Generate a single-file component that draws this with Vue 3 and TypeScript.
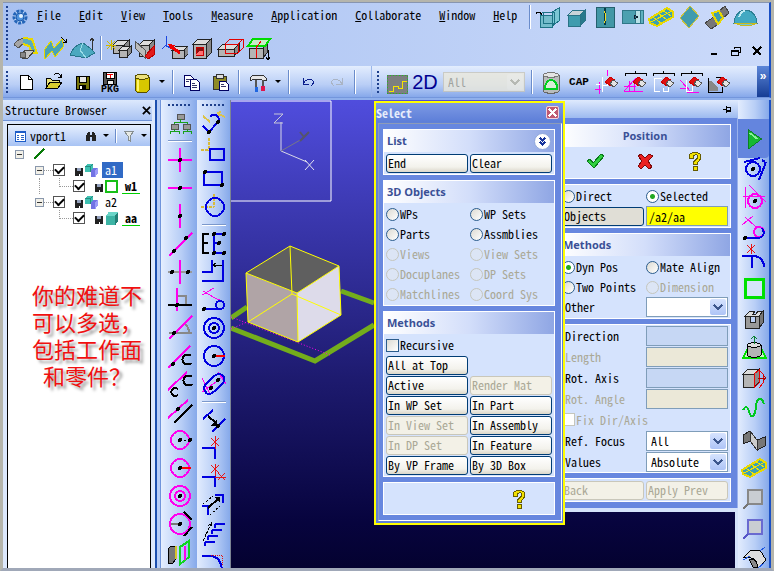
<script setup lang="ts">
import { ref } from 'vue'

interface Shape { d: string; s: string; f: string; w: number; dash?: string }

const p = (d: string, s = 'none', f = 'none', w = 1, dash?: string): Shape => ({ d, s, f, w, dash })
const ring = (x: number, y: number, r: number) =>
  `M${x - r} ${y}a${r} ${r} 0 1 0 ${2 * r} 0a${r} ${r} 0 1 0 ${-2 * r} 0Z`
const dot = (x: number, y: number, f = '#000') => p(ring(x, y, 2), 'none', f)

const M = '#ff00ee'
const B = '#0000e0'
const K = '#000'
const T = '#1d7285'
const Y = '#e8d800'
const G = '#b4b4b4'

const box = (x: number, y: number, w: number, h: number, o: number, front = G, top = '#dcdcdc', side = '#8a8a8a', line = '#222') => [
  p(`M${x} ${y}l${o} ${-o}h${w}l${-o} ${o}Z`, line, top),
  p(`M${x + w} ${y}l${o} ${-o}v${h}l${-o} ${o}Z`, line, side),
  p(`M${x} ${y}h${w}v${h}h${-w}Z`, line, front),
]
const eraser = [
  p('M12 14l5-5 5 3-4 6Z', '#c00', '#e01010'),
  p('M17 16l3-4 5 3-4 4Z', '#555', '#e4e4e4'),
]
const bracket = p('M4 8V5H25V8M14 5V3', K, 'none', 1)
const disk = [p('M8 8h13v13H8Z', K, '#77750a'), p('M11 8h7v6h-7Z', K, '#e8e8e8'), p('M11 17h7v4h-7Z', 'none', K), p('M12 18h2v3h-2Z', 'none', '#fff')]

const icons: Record<string, Shape[]> = {
  wirebox: [p('M17 9L24 5V18L17 23Z', T, '#7cc7d4'), p('M5 12h12v12H5Z', T, '#74bccb'), p('M8 9h11v11H8Z', T, 'none', 1), p('M5 12l3-3M17 24l4-4', T), p('M1 9h4l2 3M1 9l1 2', K)],
  cube: box(5, 12, 12, 11, 5, '#3f9cae', '#c9d3d8', '#28798c', '#2a7386'),
  plate: [p('M5 4h18v20H5Z', '#25606e', '#4297a6'), p('M14 5v17', '#063b48', 'none', 2), p('M13 8c3 3 2 10 0 12', '#f1df25')],
  sliding: [p('M3 7h13v13H3Z', '#2f7788', '#4ca0b0'), p('M16 7h5v13h-5Z', '#2f7788', '#b7e1e8'), p('M21 7h3v13h-3Z', '#2f7788', '#5fb1c0'), p('M15 12l4 2-4 2Z', '#123')],
  sheet: [p('M2 16L20 5L26 9V14L10 23L3 20Z', Y, '#3ea0b0', 2), p('M6 14l9 7M11 10l9 7M15 7l9 6M4 19L25 8', '#f3e400', 'none', 1)],
  rhomb: [p('M15 3L24 13L14 25L5 15Z', '#c9c13a', '#3f9bae')],
  loft: [p('M2 20l10-7 5 7-9 6Z', '#444', '#777'), p('M16 8l6-5 4 7-6 5Z', '#444', '#777'), p('M9 10l7-2 4 7-5 6Z', Y, '#3d9cb0', 2)],
  dome: [p('M3 20C4 3 25 3 26 20Z', '#2d7f93', '#42a9c2'), p('M3 20l6 2h12l5-2Z', '#c9b91e', '#6cc7d8'), p('M8 14c1-4 4-6 6-6', '#bfeaf2', 'none', 2)],
  bend: [p('M2 11C5 4 14 3 19 6L16 11C12 9 9 10 7 14Z', '#555', '#a5a5a5'), p('M11 4L20 5L25 19H20L17 12L11 10', Y, '#57aabf', 2), p('M8 20l6-4 8 1-6 7H10Z', '#444', '#c6c6c6'), p(ring(11, 21, 3), '#555', '#888')],
  fold: [p('M4 16L11 7L14 14L22 5L24 12L15 23L12 17L5 25Z', Y, '#4aa3b5', 1), p('M21 3l5 5M26 5v3h-3', K)],
  pyramid: [p('M2 21C5 13 10 10 15 9L22 14L27 19L18 24Z', '#27758a', '#4ca8bf'), p('M15 9L12 16L18 24', '#9bdde8'), p('M24 16V4M22 7l2-3 2 3', '#333')],
  explode: [...box(9, 11, 11, 8, 5), ...box(15, 16, 8, 7, 4), p('M2 11h10M7 6v10M3 7l8 8M11 7l-8 8', '#d0b800')],
  cutbox: [...box(7, 11, 10, 11, 5), p('M3 7L13 16V24L3 14Z', '#555', '#bbb'), p('M13 22L22 12V21L16 25Z', '#b00', '#e21b1b')],
  pushbox: [...box(12, 16, 12, 8, 4), p('M6 2V13M6 11L2 15M6 11l5 4', '#1b46e0', 'none', 1), p('M10 12L20 19', '#e00', 'none', 3), p('M8 10l7 1-4 5Z', 'none', '#e00')],
  shellbox: [...box(5, 10, 13, 14, 5), p('M8 13h7v8H8Z', '#c00', '#8a1010'), p('M8 21l3-4h4v4Z', 'none', '#ff7070')],
  overlap: [...box(2, 15, 16, 7, 5), p('M9 10l5-5H27V14L22 19H9ZM9 10H22V19M22 10l5-5', '#e30000')],
  greenplane: [p('M5 14H19V24H5Z', '#222', G), p('M19 14l4-4V19l-4 5Z', '#222', '#888'), p('M4 12L9 5H26L21 12Z', '#00dc00', '#c8ecc8', 2), p('M12 24V14L17 7', '#e00', 'none', 1), p('M24 16V26M22 23l2 3 2-3', K)],
  newdoc: [p('M8 7h8l4 4V21H8Z', K, '#fff'), p('M16 7v4h4', K)],
  open: [p('M6 20V10h4l2 2h7v3', K, '#e9e27c'), p('M6 20l4-6H22l-4 6Z', K, '#d8cc30'), p('M14 7c3-3 6-2 7 2M21 6v3h-3', K)],
  save: disk,
  pkg: [p('M7 1h13v12H7Z', K, '#555'), p('M10 1h8v6h-8Z', K, '#fff'), p('M11 3h6M14 3v4', '#e00'), p('M11 9h6v4h-6Z', K, '#eee')],
  cylinder: [p('M7 9V22C9 26 19 26 21 22V9Z', '#554d00', '#d8c800'), p('M10 12V23', '#fff36a', 'none', 2), p('M7 9C8 5 20 5 21 9C20 12 8 12 7 9Z', '#554d00', '#ece07a')],
  copy: [p('M6 7h6l3 3v8H6Z', '#000060', '#fff'), p('M12 11h6l3 3v8h-9Z', '#000060', '#fff'), p('M8 11h4M8 13h3M14 15h3M14 17h5M14 19h5', '#336')],
  paste: [p('M7 8h13v13H7Z', '#333', '#8e8a24'), p('M10 6h7v4h-7Z', '#333', '#ddd'), p('M13 13h6l3 3v6h-9Z', '#000060', '#fff'), p('M15 16h3M15 18h5', '#336')],
  tools: [p('M6 10L9 7H19L22 10V12H18L16 11H9L7 13Z', '#333', '#e6e6e6'), p('M12 12v7M19 12v6', '#555', 'none', 2), p('M11 19h3v5h-3Z', 'none', '#1f66e0'), p('M17 18h4v5h-4Z', 'none', '#e0144c')],
  undo: [p('M9 10v6h6M9 16c2-5 8-6 10-3 1 3-1 4-2 5', '#0a1e8c', 'none', 1)],
  redo: [p('M20 10v6h-6M20 16c-2-5-8-6-10-3-1 3 1 4 2 5', '#aab4c4', 'none', 1)],
  profile: [p('M4 7h20v18H4Z', '#6f6f6f', '#7c8080'), p('M4 7h20v18H4Z', '#22c022', 'none', 1, '1 2'), p('M6 23h4v-5h5v2h4v-7h5', '#f6e400', 'none', 1)],
  can: [p('M6 7V23C8 26 20 26 22 23V7Z', '#666', '#b9bcbc'), p('M6 7C8 4 20 4 22 7C20 10 8 10 6 7Z', '#777', '#e3e3e3'), p('M8 21C8 14 12 12 14 12S21 14 20 21Z', '#00d020', '#d7efd7', 2)],
  del1: [p('M2 21h6M14 2v6M6 14v12M18 9v6', M), p('M9 9v15M9 17h5V12M3 16h4', '#fff', 'none', 1), ...eraser],
  del2: [bracket, p('M3 23L15 10M8 24V13M13 24V14M3 18h12M3 23h19', M, 'none', 1), ...eraser],
  del3: [bracket, p('M13 10H5V23h6M14 20v3h5v-4', '#fff', 'none', 1), ...eraser],
  del4: [bracket, p('M3 12l12 13M3 20h8M10 24h12', M, 'none', 1), p('M9 12v11h6v-5', '#fff', 'none', 1), ...eraser],
  del5: [p('M3 13h3l7 6v4H3Z', 'none', '#888'), p('M3 10V24H17V19', K, 'none', 1), p('M11 9h6v5', K), ...eraser],

  hierarchy: [p('M11 5h7v5h-7ZM5 15h7v5H5ZM17 15h7v5h-7Z', '#555', '#999'), p('M14 10v3M8 15v-2H21v2M8 20v2M4 25v-3h9v3M21 20v2M17 25v-3h8v3', '#18a018')],
  plus: [p('M14 2V26M2 14H26', M, 'none', 2), dot(14, 14)],
  hline: [p('M2 14H26', M, 'none', 2), dot(14, 14)],
  vline: [p('M14 2V26', M, 'none', 2), dot(14, 14)],
  diagonal: [p('M3 26L26 3', M, 'none', 2), dot(8, 21), dot(20, 8)],
  midline: [p('M2 14H26', '#999', 'none', 2), p('M14 2V26', M, 'none', 2), dot(6, 14), dot(22, 14)],
  perp: [p('M11 10h9v9', '#888', 'none', 2), p('M11 2V25', M, 'none', 2), p('M2 19H26', K, 'none', 2), dot(11, 19)],
  angle: [p('M3 19H26M18 9c4 3 5 7 5 10', '#888', 'none', 2), p('M3 25L26 2', M, 'none', 2), dot(8, 19)],
  tangent: [p('M2 26L24 4', M, 'none', 2), dot(7, 22), p('M25 14a5 5 0 1 0 0 7', K, 'none', 2)],
  bitangent: [p('M2 20L21 2', M, 'none', 2), p('M26 7a5 5 0 1 0 0 7', K, 'none', 2), p('M12 19a4 4 0 1 0 0 6', K, 'none', 2)],
  parallel: [p('M2 20L22 2', M, 'none', 2), p('M8 25L26 7', K, 'none', 2), dot(12, 11)],
  circlerad: [p(ring(14, 14, 9), M, 'none', 2), p('M14 14H24', K, 'none', 1, '2 2'), dot(14, 14), dot(24, 14)],
  circlered: [p(ring(14, 14, 9), M, 'none', 2), p('M14 14H25', '#f00', 'none', 2), dot(14, 14)],
  concentric: [p(ring(14, 14, 10), M, 'none', 2), p(ring(14, 14, 5), M, 'none', 2), dot(14, 14)],
  circletan: [p(ring(14, 14, 10), M, 'none', 2), p('M5 14h9', '#777', 'none', 2), p('M18 2l8 8M26 17l-8 9', K, 'none', 2), dot(14, 14)],
  door: [p('M2 11l3-3h5v13l-3 4H2Z', K, '#777'), p('M10 8v13', '#d6c428', 'none', 2), p('M14 9l9-6v16l-9 7Z', '#10d520', 'none', 2), p('M19 8v14', M, 'none', 2)],

  slot: [p('M10 13L3 7M17 4l8 4M20 2l-2 6', '#dcc34a', 'none', 2), p('M3 17L9 23L18 13C20 8 17 4 10 7', B, 'none', 2), dot(9, 23), dot(18, 13)],
  rectorg: [p('M9 1V14M1 13H10', '#d8bb3b', 'none', 2, '3 1'), p('M10 12H24V23H10Z', B, 'none', 2)],
  rectangle: [p('M4 7H22V20H4Z', B, 'none', 2), dot(5, 7), dot(22, 20)],
  circorg: [p('M14 1V14M1 14H14', '#d8bb3b', 'none', 2, '3 1'), p(ring(15, 14, 9), B, 'none', 2)],
  mirror: [p('M9 4H3V23H9M3 13H8', K, 'none', 2), p('M23 4H14V23H23M14 13h5', B, 'none', 2), dot(14, 4), dot(24, 4), dot(19, 13), dot(14, 23), dot(24, 23)],
  lshape: [p('M2 14H12V2M2 23H23V2', B, 'none', 2), p('M22 7h-8M16 5l-3 2 3 2', K)],
  trim: [p('M2 9L14 2M3 5l12 7 9 4', M, 'none', 1), p('M4 23H20', B, 'none', 2), p(ring(20, 19, 4), B, 'none', 2), dot(4, 23)],
  circcenter: [p(ring(14, 14, 10), B, 'none', 2), p(ring(14, 14, 5), B, 'none', 2), dot(14, 14)],
  circradius: [p(ring(14, 14, 10), B, 'none', 2), p('M14 14H25', '#f00', 'none', 2), dot(14, 14)],
  ellipse: [p('M2 8l8 16M18 2l8 12M2 22l22-16', M), p('M5 21C2 17 6 14 12 8S22 4 24 7S23 14 16 20S7 25 5 21Z', B, 'none', 2), dot(11, 18), dot(18, 10)],
  movept: [p('M3 12L13 3M12 25L25 12', B, 'none', 2), p('M8 9l8 7', K, 'none', 2), p('M17 12v7h-7Z', 'none', K), dot(18, 19)],
  ext1: [p('M2 13H15V24', B, 'none', 2), p('M15 1V14M11 3l8 8M19 3l-8 8', '#e81414', 'none', 1)],
  ext2: [p('M2 14H15V24', B, 'none', 2), p('M15 1V13M11 2l8 8M19 2l-8 8M15 14H26M18 10l7 7M25 10l-7 7', '#e81414', 'none', 1)],
  offset: [p('M2 15H8V24M15 4H23V12', B, 'none', 2), p('M3 13L13 5M10 24L22 13', K, 'none', 1, '2 2'), p('M8 17L18 8', K, 'none', 2), p('M14 6h6v6Z', 'none', K)],
  steps: [p('M15 5h10M15 5v4M12 11h10M12 11v4M8 17h10M8 17v4M5 23h10M5 23v4', B, 'none', 2), p('M3 22L11 5M8 7l3-3v4', K, 'none', 1, '3 1')],
  fillet: [p('M2 9H10C18 9 22 15 22 26', B, 'none', 2), p('M11 8H22V18', '#e01010', 'none', 1, '1 1')],

  tanarc: [p(ring(13, 15, 7), B, 'none', 2), p('M4 8L20 4M26 8L19 26', B, 'none', 2), p('M22 6l3 2', B, 'none', 2), dot(13, 15)],
  tancirc: [p('M5 3V24M3 12H25M9 1L26 18', M, 'none', 1), p(ring(15, 17, 7), M, 'none', 2), dot(15, 17)],
  trimr: [p('M2 11L13 2M5 3l10 9 6 2', M, 'none', 1), p(ring(19, 18, 5), M, 'none', 2), p('M3 24H19C24 23 25 18 22 14', B, 'none', 2), dot(5, 24)],
  blend: [p('M2 12H14C20 12 24 17 24 23M12 12V24', B, 'none', 2), p('M11 0V10M7 1l8 8M15 1l-8 8', '#e81414', 'none', 1)],
  greensq: [p('M5 5H23V23H5Z', '#00e000', '#d4e4fa', 3)],
  notch: [p('M5 12l5-5h5l-2 3h3l2-3h5l-4 5Z', '#222', '#ddd'), p('M5 12h5v6h5v-6h4v12H5Z', '#222', '#999'), p('M19 12l4-5v12l-4 5Z', '#222', '#777')],
  extrude: [p('M3 24L7 16H22L26 24Z', '#00e000', '#c9f0c9', 2), p('M7 11V21C9 24 19 24 21 21V11Z', K, G), p('M7 11C9 8 19 8 21 11C19 14 9 14 7 11Z', K, '#ddd'), p('M14 10V2M11 5l3-3 3 3', '#0a8030', 'none', 1)],
  pull: [...box(3, 10, 11, 13, 5), p('M14 10l5-4v13l-5 5ZM19 6l4 4v9l-4 5', '#e00'), p('M18 14H26M23 11l3 3-3 3', '#a00', 'none', 1)],
  spline: [p('M3 16C6 11 8 13 9 18C12 26 15 22 16 12C17 4 21 1 24 10', '#00c820', 'none', 2)],
  surface: [p('M3 11L10 7L17 16L25 13V22L17 26L10 17L3 20Z', '#222', '#777'), p('M10 7L17 16V26L10 17Z', '#333', '#ccc')],
  zoom1: [p('M8 6H22V20H8Z', '#888', '#c9cdd2', 2), p('M8 20L3 25', '#777', 'none', 2)],
  zoom2: [p('M8 6H22V20H8Z', '#6a6ad0', '#c9cdd2', 2), p('M8 20L3 25', '#5757c8', 'none', 2)],
  round: [p('M4 13L11 6H20L26 16L18 24C17 16 14 13 4 13Z', K, '#ddd'), p('M9 15l4 8 5 1C17 17 15 15 9 15Z', K, '#888'), p('M3 16L10 12M20 7l5-4M18 24l6-5', '#1d56e0', 'none', 1)],

  check: [p('M6 14L9 12L12 16L20 7L23 9L13 21Z', '#087a18', '#30d040')],
  cross: [p('M7 9L10 7L14 11L18 7L22 9L17 14L21 20L18 22L14 18L10 22L7 19L11 14Z', '#7c0909', '#ea2020')],
  help: [p('M8 10C8 4 20 4 20 10C20 14 16 14 16 17H12C12 13 17 12 17 10C17 7 12 7 12 11H8ZM12 19h4v4h-4Z', '#665c00', '#f2e000')],
}

const menus = ['File', 'Edit', 'View', 'Tools', 'Measure', 'Application', 'Collaborate', 'Window', 'Help']
const solids = ['wirebox', 'cube', 'plate', 'sliding', 'sheet', 'rhomb', 'loft', 'dome']
const shapeRow = ['bend', 'fold', 'pyramid', '|', 'explode', 'cutbox', 'pushbox', 'shellbox', 'overlap', 'greenplane']
const erasers = ['del1', 'del2', 'del3', 'del4', 'del5']
const stripOne = ['hierarchy', '|', 'plus', 'hline', 'vline', 'diagonal', 'midline', 'perp', 'angle', 'tangent', 'bitangent', 'parallel', 'circlerad', 'circlered', 'concentric', 'circletan', 'door']
const stripTwo = ['slot', 'rectorg', 'rectangle', 'circorg', '|', 'mirror', 'lshape', 'trim', 'circcenter', 'circradius', 'ellipse', '|', 'movept', 'ext1', 'ext2', 'offset', 'steps', 'fillet']
const stripRight = ['tanarc', 'tancirc', 'trimr', 'blend', 'greensq', 'notch', 'extrude', 'pull', 'spline', 'surface', 'sheet', 'zoom1', 'zoom2', 'round']

const tree = [
  { name: 'a1', part: true, selected: true, last: false },
  { name: 'w1', part: false, selected: false, last: false },
  { name: 'a2', part: true, selected: false, last: true },
  { name: 'aa', part: false, selected: false, last: true },
]

const objectKinds = [
  { label: 'WPs', off: false }, { label: 'WP Sets', off: false },
  { label: 'Parts', off: false }, { label: 'Assmblies', off: false },
  { label: 'Views', off: true }, { label: 'View Sets', off: true },
  { label: 'Docuplanes', off: true }, { label: 'DP Sets', off: true },
  { label: 'Matchlines', off: true }, { label: 'Coord Sys', off: true },
]
const methods = [
  { label: 'All at Top', off: false }, null,
  { label: 'Active', off: false }, { label: 'Render Mat', off: true },
  { label: 'In WP Set', off: false }, { label: 'In Part', off: false },
  { label: 'In View Set', off: true }, { label: 'In Assembly', off: false },
  { label: 'In DP Set', off: true }, { label: 'In Feature', off: false },
  { label: 'By VP Frame', off: false }, { label: 'By 3D Box', off: false },
]
const fields = [
  { label: 'Direction', off: false }, { label: 'Length', off: true },
  { label: 'Rot. Axis', off: false }, { label: 'Rot. Angle', off: true },
]
const source = ref('Selected')
const mode = ref('Dyn Pos')
const kind = ref('')
const target = ref('/a2/aa')
</script>

<template>
  <div class="window">
    <header class="top">
      <i class="grip tall"></i>
      <div class="rows">
        <div class="row first">
          <svg class="logo" viewBox="0 0 16 16" aria-hidden="true">
            <circle cx="8" cy="8" r="6" fill="#cfe6fb" stroke="#2465b8" stroke-width="3" stroke-dasharray="3 1" />
            <circle cx="8" cy="8" r="4" fill="#4f93dc" stroke="#1c58ac" />
            <circle cx="9" cy="7" r="2" fill="#e4f2ff" />
          </svg>
          <nav class="menu">
            <a v-for="m in menus" :key="m" href="#"><u>{{ m[0] }}</u>{{ m.slice(1) }}</a>
          </nav>
          <i class="sep menu-sep"></i>
          <button v-for="n in solids" :key="n" class="ico" :aria-label="n">
            <svg viewBox="0 0 28 28"><path v-for="(s, i) in icons[n]" :key="i" :d="s.d" :stroke="s.s" :fill="s.f" :stroke-width="s.w" :stroke-dasharray="s.dash" /></svg>
          </button>
        </div>
        <div class="row second">
          <template v-for="n in shapeRow" :key="n">
            <i v-if="n === '|'" class="sep narrow"></i>
            <button v-else class="ico" :aria-label="n">
              <svg viewBox="0 0 28 28"><path v-for="(s, i) in icons[n]" :key="i" :d="s.d" :stroke="s.s" :fill="s.f" :stroke-width="s.w" /></svg>
            </button>
          </template>
          <div class="controls">
            <button aria-label="Minimize"><svg viewBox="0 0 12 12"><path d="M2 9H8" stroke="#000" stroke-width="2" /></svg></button>
            <button aria-label="Restore"><svg viewBox="0 0 12 12"><path d="M4 4V2H10V7H8M4 2H10M1 5H8V10H1ZM1 6H8" stroke="#000" fill="none" /></svg></button>
            <button aria-label="Close"><svg viewBox="0 0 12 12"><path d="M2 2L10 10M10 2L2 10" stroke="#000" stroke-width="2" /></svg></button>
          </div>
        </div>
      </div>
    </header>

    <div class="toolbar">
      <div class="bar standard">
        <i class="grip"></i>
        <button v-for="n in ['newdoc', 'open', 'save']" :key="n" class="ico" :aria-label="n">
          <svg viewBox="0 0 28 28"><path v-for="(s, i) in icons[n]" :key="i" :d="s.d" :stroke="s.s" :fill="s.f" /></svg>
        </button>
        <button class="ico pkg"><svg viewBox="0 0 28 14"><path v-for="(s, i) in icons.pkg" :key="i" :d="s.d" :stroke="s.s" :fill="s.f" /></svg>PKG</button>
        <button class="ico spaced" aria-label="cylinder"><svg viewBox="0 0 28 28"><path v-for="(s, i) in icons.cylinder" :key="i" :d="s.d" :stroke="s.s" :fill="s.f" :stroke-width="s.w" /></svg></button>
        <button class="drop" aria-label="More solids"></button>
        <i class="sep"></i>
        <button v-for="n in ['copy', 'paste']" :key="n" class="ico" :aria-label="n">
          <svg viewBox="0 0 28 28"><path v-for="(s, i) in icons[n]" :key="i" :d="s.d" :stroke="s.s" :fill="s.f" /></svg>
        </button>
        <i class="sep"></i>
        <button class="ico" aria-label="tools"><svg viewBox="0 0 28 28"><path v-for="(s, i) in icons.tools" :key="i" :d="s.d" :stroke="s.s" :fill="s.f" :stroke-width="s.w" /></svg></button>
        <button class="drop" aria-label="More tools"></button>
        <i class="sep"></i>
        <button v-for="n in ['undo', 'redo']" :key="n" class="ico" :aria-label="n">
          <svg viewBox="0 0 28 28"><path v-for="(s, i) in icons[n]" :key="i" :d="s.d" :stroke="s.s" :fill="s.f" :stroke-width="s.w" /></svg>
        </button>
        <i class="sep"></i>
      </div>
      <div class="bar drawing">
        <i class="grip"></i>
        <button class="ico" aria-label="profile"><svg viewBox="0 0 28 28"><path v-for="(s, i) in icons.profile" :key="i" :d="s.d" :stroke="s.s" :fill="s.f" :stroke-width="s.w" :stroke-dasharray="s.dash" /></svg></button>
        <button class="ico two-d">2D</button>
        <span class="combo filter">
          <select disabled aria-label="Filter"><option>All</option></select>
          <svg viewBox="0 0 16 16" aria-hidden="true"><path d="M4 6l4 4 4-4" /></svg>
        </span>
        <i class="sep"></i>
        <button class="ico" aria-label="can"><svg viewBox="0 0 28 28"><path v-for="(s, i) in icons.can" :key="i" :d="s.d" :stroke="s.s" :fill="s.f" :stroke-width="s.w" /></svg></button>
        <button class="ico cap">CAP</button>
        <button v-for="n in erasers" :key="n" class="ico" :aria-label="n">
          <svg viewBox="0 0 28 28"><path v-for="(s, i) in icons[n]" :key="i" :d="s.d" :stroke="s.s" :fill="s.f" :stroke-width="s.w" /></svg>
        </button>
      </div>
      <button class="overflow">»</button>
    </div>

    <main class="work">
      <aside class="browser">
        <div class="browser-title">
          <span>Structure Browser</span>
          <button aria-label="Close browser"><svg viewBox="0 0 10 10"><path d="M1 1L9 9M9 1L1 9" stroke="#000" stroke-width="1" /></svg></button>
        </div>
        <div class="tree">
          <div class="tree-head">
            <svg class="list" viewBox="0 0 12 12"><path d="M1 1h10v10H1Z" fill="#fff" stroke="#1c5cc8" /><path d="M1 2H11" stroke="#1c5cc8" stroke-width="2" /><path d="M3 5h2M3 7h2M3 9h2M7 5h3M7 7h3M7 9h3" stroke="#2a64c4" /></svg>
            <span>vport1</span>
            <svg class="find" viewBox="0 0 12 12"><path d="M1 11V6l2-4h2v3h2V2h2l2 4v5H7V7H5v4Z" fill="#222" /></svg>
            <i class="caret"></i>
            <i class="sep slim"></i>
            <svg class="find" viewBox="0 0 12 12"><path d="M1 1H11L7 6V11L5 10V6Z" fill="#e7e9e4" stroke="#868e90" /></svg>
            <i class="caret"></i>
          </div>
          <div class="node root"><i class="minus"></i><svg class="slash" viewBox="0 0 12 12"><path d="M1 11L11 1" stroke="#087a08" stroke-width="2" /></svg></div>
          <div v-for="n in tree" :key="n.name" class="node" :class="n.part ? 'part' : 'leaf'">
            <template v-if="n.part"><i class="minus"></i><i class="stub"></i></template>
            <template v-else><i class="pipe" :class="{ end: n.last }"></i><i class="elbow"></i></template>
            <input :id="'node-' + n.name" type="checkbox" class="tick" checked>
            <svg class="mini" viewBox="0 0 10 10"><path d="M1 1h8v8H1Z" fill="#222" /><path d="M3 1h4v3H3Z" fill="#93a0bc" /><path d="M5 7h1v2H5Z" fill="#fff" /></svg>
            <svg v-if="n.part" class="glyph" viewBox="0 0 16 16"><path d="M1 4l3-3h6v6l-3 3H1Z" fill="#3fc1b2" /><path d="M1 4h6v6M7 4l3-3" stroke="#23897e" fill="none" /><path d="M7 8l3-3h5v6l-3 4H7Z" fill="#7373e4" /><path d="M7 8h5v7l3-4V5l-3 3Z" fill="#9c9cf8" /></svg>
            <svg v-else-if="n.name === 'w1'" class="glyph" viewBox="0 0 16 16"><path d="M2 2H14V14H2Z" fill="#fff" stroke="#18c018" stroke-width="2" /></svg>
            <svg v-else class="glyph" viewBox="0 0 16 16"><path d="M2 5l3-4h10v10l-3 4H2Z" fill="#3db4a5" /><path d="M12 5l3-4v10l-3 4Z" fill="#237f76" /><path d="M2 5l3-4h10l-3 4Z" fill="#6ad5c8" /></svg>
            <label :for="'node-' + n.name" :class="{ selected: n.selected }">{{ n.name }}</label>
          </div>
          <p class="note">你的难道不<br>可以多选，<br>包括工作面<br>和零件？</p>
        </div>
      </aside>
      <div class="gutter"></div>

      <div class="strip one">
        <i class="grip flat"></i>
        <template v-for="(n, k) in stripOne" :key="k">
          <i v-if="n === '|'" class="rule"></i>
          <button v-else class="ico" :aria-label="n"><svg viewBox="0 0 28 28"><path v-for="(s, i) in icons[n]" :key="i" :d="s.d" :stroke="s.s" :fill="s.f" :stroke-width="s.w" :stroke-dasharray="s.dash" /></svg></button>
        </template>
      </div>
      <div class="strip two">
        <i class="grip flat"></i>
        <template v-for="(n, k) in stripTwo" :key="k">
          <i v-if="n === '|'" class="rule"></i>
          <button v-else class="ico" :aria-label="n"><svg viewBox="0 0 28 28"><path v-for="(s, i) in icons[n]" :key="i" :d="s.d" :stroke="s.s" :fill="s.f" :stroke-width="s.w" :stroke-dasharray="s.dash" /></svg></button>
        </template>
      </div>

      <section class="center">
        <svg class="scene" viewBox="231 101 150 300">
          <path d="M231 102H331V202H231" fill="none" stroke="#fff" />
          <path d="M281 152V123M281 152L307 163" stroke="#d8d8e8" />
          <path d="M281 152L302 140" stroke="#777788" />
          <path d="M274 115H283L274 124H283" stroke="#c8c8d8" fill="none" />
          <path d="M300 133L304 138M309 133L300 142" stroke="#55556a" fill="none" stroke-width="2" />
          <path d="M305 161L314 171M314 161L305 171" stroke="#e4e4f0" fill="none" />
          <path d="M231 319L247 308M231 329L315 362L374 326M341 292L374 304" stroke="#73ad1c" stroke-width="5" fill="none" />
          <path d="M231 318L330 356M231 330L247 323" stroke="#f0e" stroke-dasharray="1 2" />
          <path d="M246 274L290 247L339 267L297 294Z" fill="#5f5f5f" />
          <path d="M246 274L297 294L298 343L248 323Z" fill="#b0a4a6" />
          <path d="M297 294L339 267L341 316L298 343Z" fill="#dddbea" />
          <path d="M246 274L290 247L339 267L297 294ZM246 274L248 323L298 343L341 316L339 267M297 294L298 343M290 247L292 295L248 323M292 295L341 316" fill="none" stroke="#ffff00" />
        </svg>

        <aside class="position">
          <div class="dock-title"><svg viewBox="0 0 10 10"><path d="M1 5H4M4 2V9M4 3H8V7H4M4 6H8" stroke="#000" fill="none" /></svg></div>
          <form class="dock-body" @submit.prevent>
            <div class="card">
              <h2 class="mid">Position</h2>
              <div class="actions">
                <button v-for="n in ['check', 'cross', 'help']" :key="n" type="button" class="ico" :aria-label="n"><svg viewBox="0 0 28 28"><path v-for="(s, i) in icons[n]" :key="i" :d="s.d" :stroke="s.s" :fill="s.f" /></svg></button>
              </div>
            </div>
            <div class="card pad grid">
              <label v-for="s in ['Direct', 'Selected']" :key="s" class="opt"><input v-model="source" type="radio" name="source" :value="s">{{ s }}</label>
              <button type="button" class="push flatgrey">Objects</button>
              <input v-model="target" class="field yellow" aria-label="Objects">
            </div>
            <div class="card">
              <h2>Methods</h2>
              <div class="pad grid">
                <label v-for="s in ['Dyn Pos', 'Mate Align', 'Two Points', 'Dimension']" :key="s" class="opt" :class="{ off: s === 'Dimension' }"><input v-model="mode" type="radio" name="mode" :value="s" :disabled="s === 'Dimension'">{{ s }}</label>
                <label for="other" class="name">Other</label>
                <span class="combo"><select id="other"><option></option></select><svg viewBox="0 0 16 16" aria-hidden="true"><path d="M4 6l4 4 4-4" /></svg></span>
              </div>
            </div>
            <div class="card pad grid values">
              <template v-for="f in fields" :key="f.label">
                <label :for="f.label" class="name" :class="{ off: f.off }">{{ f.label }}</label>
                <input :id="f.label" class="field" :class="{ beige: f.off }" :disabled="f.off">
              </template>
              <label class="opt off wide"><input type="checkbox" disabled>Fix Dir/Axis</label>
              <label for="focus" class="name">Ref. Focus</label>
              <span class="combo"><select id="focus"><option>All</option></select><svg viewBox="0 0 16 16" aria-hidden="true"><path d="M4 6l4 4 4-4" /></svg></span>
              <label for="values" class="name">Values</label>
              <span class="combo"><select id="values"><option>Absolute</option></select><svg viewBox="0 0 16 16" aria-hidden="true"><path d="M4 6l4 4 4-4" /></svg></span>
            </div>
            <div class="card pad grid">
              <button type="button" class="push" disabled>Back</button>
              <button type="button" class="push" disabled>Apply Prev</button>
            </div>
          </form>
        </aside>

        <form class="dialog" @submit.prevent>
          <div class="dialog-title"><span>Select</span><button type="button" aria-label="Close"><svg viewBox="0 0 10 10"><path d="M1 1L9 9M9 1L1 9" stroke="#fff" stroke-width="2" /></svg></button></div>
          <div class="dialog-body">
            <div class="card">
              <h2>List<button type="button" class="fold" aria-label="Collapse"><svg viewBox="0 0 16 16"><path d="M5 4l3 3 3-3M5 8l3 3 3-3" fill="none" stroke="#17349c" stroke-width="2" /></svg></button></h2>
              <div class="pad grid"><button type="button" class="push">End</button><button type="button" class="push">Clear</button></div>
            </div>
            <div class="card">
              <h2>3D Objects</h2>
              <div class="pad grid">
                <label v-for="o in objectKinds" :key="o.label" class="opt" :class="{ off: o.off }"><input v-model="kind" type="radio" name="kind" :value="o.label" :disabled="o.off">{{ o.label }}</label>
              </div>
            </div>
            <div class="card">
              <h2>Methods</h2>
              <div class="pad grid">
                <label class="opt wide"><input type="checkbox">Recursive</label>
                <template v-for="(m, i) in methods" :key="i">
                  <button v-if="m" type="button" class="push" :disabled="m.off">{{ m.label }}</button>
                  <span v-else></span>
                </template>
              </div>
            </div>
            <div class="card assist">
              <button type="button" class="ico" aria-label="Help"><svg viewBox="0 0 28 28"><path v-for="(s, i) in icons.help" :key="i" :d="s.d" :stroke="s.s" :fill="s.f" /></svg></button>
            </div>
          </div>
        </form>
      </section>

      <div class="strip right">
        <button class="play" aria-label="Run"><svg viewBox="0 0 28 28"><path d="M7 3L23 14L7 26Z" fill="#16b832" stroke="#087a1c" /><path d="M9 7L18 14" stroke="#8cf09c" stroke-width="2" /></svg></button>
        <button v-for="n in stripRight" :key="n" class="ico" :aria-label="n"><svg viewBox="0 0 28 28"><path v-for="(s, i) in icons[n]" :key="i" :d="s.d" :stroke="s.s" :fill="s.f" :stroke-width="s.w" /></svg></button>
      </div>
    </main>
  </div>
</template>

<style>
body { margin: 0; }
</style>

<style scoped>
.window, .window * { box-sizing: border-box; }
.window {
  display: flex; flex-direction: column; height: 100vh; overflow: hidden;
  border: 3px solid #b5b5ac; border-top-width: 2px; border-bottom-color: #a0a8b8;
  background: #c4d6f8; color: #000;
  font: 12px/16px "Noto Sans Mono CJK SC", "Noto Sans CJK SC", "Liberation Mono", monospace;
}
button, input, select { font: inherit; margin: 0; padding: 0; color: inherit; }
button { background: none; border: 0; }
svg { display: block; shape-rendering: crispEdges; }
.ico { flex: none; width: 28px; height: 28px; }
.ico svg { width: 28px; height: 28px; }
.grip { flex: none; width: 2px; height: 22px; background: repeating-linear-gradient(#1d3f8c 0 2px, transparent 2px 4px); }
.grip.tall { height: 56px; margin: 3px 0 0; }
.grip.flat { width: 24px; height: 2px; margin: 4px 0 3px; background: repeating-linear-gradient(90deg, #1d3f8c 0 2px, transparent 2px 4px); }
.sep { flex: none; width: 10px; height: 24px; background: linear-gradient(90deg, transparent 4px, #6a8ccb 4px 5px, #fff 5px 6px, transparent 6px); }
.sep.narrow { width: 8px; }
.sep.slim { height: 14px; }

.top { display: flex; padding-left: 3px; background: linear-gradient(90deg, #a8c1f1, #cbdafa); border-right: 2px solid #1a4fc4; border-top: 1px solid #8795b0; }
.rows { flex: 1; padding-left: 4px; }
.row { display: flex; align-items: center; }
.first { height: 27px; }
.second { height: 36px; }
.logo { width: 16px; height: 16px; margin-right: 9px; shape-rendering: auto; }
.menu { display: flex; gap: 18px; }
.menu a { color: #000; text-decoration: none; line-height: 20px; padding-bottom: 4px; }
.menu-sep { margin: 0 0 0 8px; }
.controls { display: flex; margin-left: auto; padding: 6px 2px 0 0; }
.controls button { width: 21px; display: flex; justify-content: center; }
.controls svg { width: 12px; height: 12px; }

.toolbar { display: flex; height: 32px; background: linear-gradient(#e3edfe, #b9cef6 60%, #86a8ea); border-right: 2px solid #1a4fc4; border-bottom: 1px solid #7396dc; }
.bar { display: flex; align-items: center; padding-left: 3px; }
.standard { padding-right: 11px; }
.standard .grip { margin-right: 4px; }
.drawing { flex: 1; border-left: 1px solid #9ab6ea; padding-left: 5px; }
.drawing .grip { margin-right: 4px; }
.spaced { margin-left: 4px; }
.pkg { font: bold 10px/10px "Liberation Mono", monospace; text-align: center; }
.ico.pkg svg { height: 14px; margin-top: 3px; }
.drop { width: 12px; height: 28px; display: flex; align-items: center; justify-content: center; }
.drop::before, .caret { content: ""; width: 0; height: 0; border: 3px solid transparent; border-top-color: #000; border-bottom: 0; }
.two-d { font: 20px/28px "Liberation Sans", sans-serif; color: #000090; }
.cap { font: bold 11px/28px "Liberation Mono", monospace; }
.filter { width: 82px; margin: 0 2px 0 4px; opacity: 0.8; }
.overflow { width: 12px; color: #fff; background: linear-gradient(#5c86d8, #163d94); font: bold 12px/14px "Liberation Sans", sans-serif; padding-bottom: 12px; }

.work { flex: 1; min-height: 0; display: flex; padding-top: 2px; background: #8fb0ec; }
.browser { flex: none; width: 149px; display: flex; flex-direction: column; background: #dce8fc; }
.browser-title { display: flex; align-items: center; justify-content: space-between; height: 21px; padding: 0 1px 0 2px; background: linear-gradient(#dde9fd, #a9c3f3); border-bottom: 1px solid #6f93d8; }
.browser-title svg { width: 9px; height: 9px; shape-rendering: auto; }
.browser-title path { stroke-width: 2; }
.tree { flex: 1; margin: 3px 1px 0 4px; background: #fff; border: 1px solid #000; border-bottom: 0; }
.tree-head { display: flex; align-items: center; height: 21px; padding-left: 6px; background: linear-gradient(#e6effe, #a8c3f4); }
.tree-head > * { flex: none; }
.list { width: 12px; height: 12px; margin-right: 4px; }
.find { width: 12px; height: 12px; margin-right: 6px; }
.tree-head span { width: 55px; }
.tree-head .sep { margin-left: 2px; margin-right: 2px; }
.node { display: flex; align-items: center; height: 16px; }
.node > * { flex: none; }
.root { padding-left: 7px; gap: 9px; }
.part { padding-left: 27px; }
.leaf { padding-left: 31px; }
.minus { width: 9px; height: 9px; border: 1px solid #8a98ac; background: linear-gradient(#333, #333) center / 5px 1px no-repeat #f2f0e8; }
.slash { width: 12px; height: 12px; }
.stub { width: 9px; height: 1px; border-top: 1px dotted #999; }
.pipe { width: 20px; height: 16px; border-left: 1px dotted #999; }
.pipe.end { border-color: transparent; }
.elbow { width: 14px; height: 9px; align-self: flex-start; border: 1px dotted #999; border-width: 0 0 1px 1px; }
.tick { appearance: none; width: 12px; height: 12px; margin-right: 9px; border: 1px solid #555; background: #fff; }
.tick:checked::before { content: ""; display: block; width: 7px; height: 4px; margin: 1px; border: 2px solid #000; border-width: 0 0 2px 2px; transform: rotate(-45deg); }
.mini { width: 10px; height: 10px; margin-top: 4px; }
.glyph { width: 15px; height: 15px; margin-right: 3px; }
.node label { padding: 0 3px; line-height: 16px; }
.node .selected { background: #316ac5; color: #fff; padding-right: 6px; }
.leaf label { font-weight: bold; line-height: 15px; border-bottom: 1px solid #00d000; }
.note { margin: 57px 0 0 16px; text-align: center; white-space: nowrap; color: #f01010; font: 22px/27px "Liberation Sans", "Noto Sans CJK SC", sans-serif; text-shadow: 3px 3px 3px #999; }
.gutter { flex: none; width: 10px; background: linear-gradient(90deg, #dce8fc 3px, #1c4fae 3px 5px, #b5ccf6 5px 8px, #7094dc 8px 9px, #e5effe 9px); }

.strip { flex: none; display: flex; flex-direction: column; align-items: center; overflow: hidden; background: linear-gradient(90deg, #e2ecfe, #b8cef6 55%, #86a9ea); }
.one { width: 35px; }
.two { width: 34px; border-right: 1px solid #7b8494; }
.rule { flex: none; width: 24px; height: 9px; background: linear-gradient(transparent 3px, #7b98cc 3px 4px, #fff 4px 5px, transparent 5px); }
.right { width: 33px; border-right: 2px solid #1a4fc4; }
.right .ico { height: 30px; padding: 1px 0; }
.play { flex: none; width: 31px; height: 39px; margin: 19px 0 -5px; background: #6485de; border-radius: 0 0 4px 0; display: flex; align-items: center; justify-content: center; }
.play svg { width: 24px; height: 24px; }

.center { flex: 1; min-width: 0; position: relative; display: flex; justify-content: flex-end; align-items: flex-start; border-right: 3px solid #d5e3fb; background: linear-gradient(#504ddd, #1d1a6e 60%, #07043e 90%, #040230); }
.scene { position: absolute; left: 0; top: 0; width: 150px; height: 300px; shape-rendering: auto; }

.position { width: 186px; margin-right: -3px; position: relative; border-bottom: 4px solid #d5e3fb; }
.dock-title { height: 18px; display: flex; align-items: center; justify-content: flex-end; padding-right: 6px; background: linear-gradient(#dfeafd, #9dbaf0); }
.dock-title svg { width: 10px; height: 10px; }
.dock-body { padding: 6px 6px 6px 7px; display: flex; flex-direction: column; gap: 5px; background: #6787df; border-right: 1px solid #9ab2ec; }
.dock-body .pad.grid { grid-template-columns: 82px 1fr; }
.card { background: #d5e3fd; border: 1px solid #fff; }
.card h2 { display: flex; align-items: center; height: 22px; margin: 0; padding: 0 3px; color: #3a5096; background: linear-gradient(90deg, #fff, #d3defa 50%, #8fa6e4); font: bold 11px/16px "Open Sans", "Noto Sans", sans-serif; }
.card h2.mid { justify-content: center; }
.actions { display: flex; justify-content: center; gap: 22px; height: 31px; }
.pad { padding: 1px 2px; }
.grid { display: grid; grid-template-columns: 82px 82px; grid-auto-rows: 20px; column-gap: 2px; align-items: center; }
.values.grid { grid-auto-rows: 21px; padding-top: 0; padding-bottom: 0; }
.opt { display: flex; align-items: center; white-space: nowrap; }
.opt.off, .name.off { color: #aaa896; }
.wide { grid-column: 1 / -1; }
.opt input { appearance: none; flex: none; width: 13px; height: 13px; margin-right: 1px; border: 1px solid #2b5c8c; background: linear-gradient(135deg, #dcdad2, #fff); }
.opt input[type="radio"] { border-radius: 50%; }
.opt input[type="radio"]:checked { background: radial-gradient(#22a822 0 2px, #fff 3px); }
.opt input:disabled { border-color: #c5c6bd; background: #dce5f5; }
.opt input[type="checkbox"]:disabled { background: #fff; }
.name { padding-left: 3px; white-space: nowrap; }
.push { height: 19px; padding: 0 1px; text-align: left; white-space: nowrap; line-height: 16px; border: 1px solid #003c74; border-radius: 3px; background: linear-gradient(#fff, #f3f2ec 70%, #dbd7ca); }
.push:disabled { color: #aaa896; border-color: #c9c7ba; background: #f3f1e7; }
.flatgrey { background: #e0ded6; }
.field { width: 100%; height: 20px; padding: 0 2px; border: 1px solid #7f9db9; border-radius: 0; background: #c6d7f4; }
.field.beige { background: #ebe8d8; }
.field.yellow { background: #ff0; }
.combo { display: grid; align-items: center; }
.combo > * { grid-area: 1 / 1; }
.combo select { appearance: none; width: 100%; height: 20px; padding: 0 18px 0 4px; border: 1px solid #7f9db9; border-radius: 0; background: #fff; }
.combo svg { justify-self: end; width: 16px; height: 16px; margin-right: 2px; pointer-events: none; border-radius: 2px; background: linear-gradient(#d6e3fe, #aec4f6); }
.combo path { fill: none; stroke: #3c568c; stroke-width: 2; }
.filter select { background: #ebe9dc; border-color: #c8c6ba; color: #99988a; opacity: 1; }
.filter svg { background: #efede2; }
.filter path { stroke: #b5b4a4; }

.dialog { position: absolute; right: 170px; top: 1px; width: 191px; border: 2px solid #ff0; background: #5f80d8; }
.dialog-title { display: flex; align-items: center; justify-content: space-between; height: 19px; padding: 0 4px 0 0; color: #e6ecfb; font-weight: bold; background: linear-gradient(#7d9ae4, #5d7ed8); }
.dialog-title button { width: 13px; height: 13px; padding: 1px; border: 1px solid #f0d0da; border-radius: 2px; background: #bf5a72; }
.dialog-body { display: flex; flex-direction: column; gap: 5px; margin: 1px 1px 2px 2px; padding: 5px 6px 5px 4px; background: #6787df; border: 1px solid #8d9bb8; border-right-color: #fff; border-bottom-color: #fff; }
.fold { width: 17px; height: 17px; margin-left: auto; border: 1px solid #8ea6da; border-radius: 50%; background: #fff; }
.fold svg { width: 15px; height: 15px; }
.assist { display: flex; justify-content: flex-end; padding: 2px 21px 1px; }
</style>
